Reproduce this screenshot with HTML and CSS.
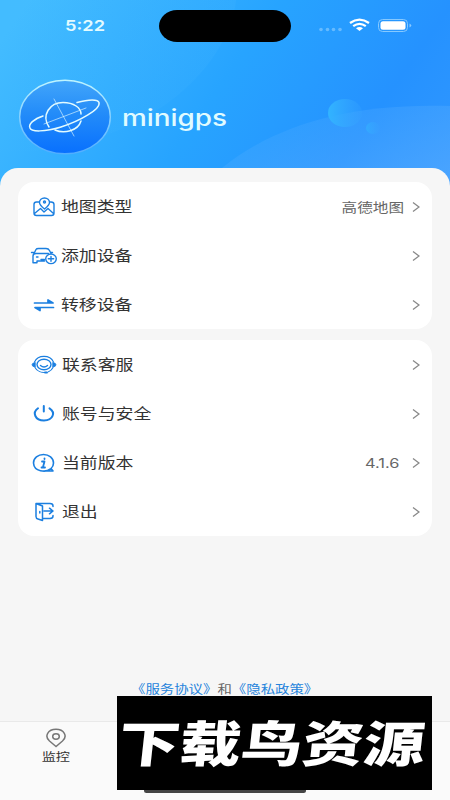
FILE: index.html
```html
<!DOCTYPE html>
<html lang="zh-CN">
<head>
<meta charset="utf-8">
<title>minigps</title>
<link rel="stylesheet" href="styles.css">
</head>
<body>
<main class="screen">
  <header class="hero">
    <svg class="hero-art" viewBox="0 0 450 190" preserveAspectRatio="none">
      <defs>
        <linearGradient id="bubble"><stop stop-color="#32b4ff"/><stop offset="1" stop-color="#38a5ff" stop-opacity=".2"/></linearGradient>
        <linearGradient id="hill" x2="1" y2="1"><stop stop-color="#59b2ff" stop-opacity=".08"/><stop offset="1" stop-color="#68b3ff" stop-opacity=".5"/></linearGradient>
        <linearGradient id="glow" x2="1"><stop stop-color="#6bcbff" stop-opacity="0"/><stop offset="1" stop-color="#6bcbff" stop-opacity=".08"/></linearGradient>
      </defs>
      <path d="M0 0H236C230 60 155 151 0 153Z" fill="url(#glow)"/>
      <path d="M222 168C275 125 350 103 450 106V190H222Z" fill="url(#hill)"/>
      <ellipse cx="345" cy="113" rx="17" ry="14" fill="url(#bubble)"/>
      <ellipse cx="373" cy="128" rx="7" ry="6" fill="url(#bubble)" opacity=".6"/>
    </svg>
    <div class="status">
      <span class="time"><span class="wide">5:22</span></span>
      <span class="island"></span>
      <svg class="signals" viewBox="0 0 94 16">
        <g fill="#7cc5ff" opacity=".75"><circle cx="3" cy="12.500" r="1.800"/><circle cx="9.500" cy="12.500" r="1.800"/><circle cx="15.500" cy="12.500" r="1.800"/><circle cx="22" cy="12.500" r="1.800"/></g>
        <g fill="none" stroke="#fff" stroke-width="2.300"><path d="M32 6Q41.500-.7 51 6M35.200 9.200Q41.500 4.500 47.800 9.200"/></g>
        <path d="M38 11.200Q41.500 8.600 45 11.200L41.500 14Z" fill="#fff"/>
        <rect x="60.500" y="2.500" width="29" height="12" rx="4" fill="none" stroke="#86c9ff"/>
        <rect x="62.500" y="4.300" width="25" height="8.400" rx="2.500" fill="#fff"/>
        <path d="M91.500 6.500Q95 8.500 91.500 10.500Z" fill="#8bcaff"/>
      </svg>
    </div>
    <div class="profile">
      <svg class="avatar" viewBox="0 0 94 76">
        <defs><linearGradient id="ball" x2="0" y2="1"><stop stop-color="#42a5fa"/><stop offset=".45" stop-color="#238cf9"/><stop offset="1" stop-color="#0870fe"/></linearGradient>
        <linearGradient id="rim" x2="0" y2="1"><stop stop-color="#bff5ff"/><stop offset="1" stop-color="#51adff"/></linearGradient></defs>
        <ellipse cx="47" cy="38" rx="45.300" ry="36.800" fill="url(#ball)" stroke="url(#rim)" stroke-width="1.400"/>
        <g fill="none" stroke="#e2fbff" stroke-width="1.500" stroke-linecap="round">
          <path d="M31 48C23 36 32 23.500 45 23.500C56 23.500 63 29 63 35"/>
          <path d="M37 51C46 55 60 52 63 42"/>
          <path d="M59 23.500C71 20 80 20 81 23.500C83 30 62 42 43 48C27 53 13 53 12 49C10 45 16 40 25 37"/>
          <path d="M36 20L56 57M26 45L68 29" stroke-width=".8" opacity=".8"/>
        </g>
      </svg>
      <h1 class="name"><span class="wide">minigps</span></h1>
    </div>
  </header>
  <section class="sheet">
    <div class="card">
      <div class="row">
        <svg class="icon" viewBox="0 0 28 24"><path d="M9 7H6.500Q4 7 4 9.500V18Q4 20.500 6.500 20.500H21.500Q24 20.500 24 18V9.500Q24 7 21 7H20M4.500 18.500L10.500 13.500L14 17L18 13.500L23.500 18.500M14.500 14Q9.500 10 9.500 7.500A5 4.500 0 0 1 19.500 7.500Q19.500 10 14.500 14Z"/><circle cx="14.500" cy="7" r="1"/></svg>
        <span class="label"><span class="wide">地图类型</span></span>
        <span class="value map"><span class="wide">高德地图</span></span>
        <svg class="chevron" viewBox="0 0 8 12"><path d="M1 1.500L7 6L1 10.500"/></svg>
      </div>
      <div class="row">
        <svg class="icon" viewBox="0 0 28 24"><path d="M4 9.500L6 5.500Q6.500 4.500 8.500 4.500H16Q18.500 4.500 19.500 6.500L21 9.500M1.500 8.500H3.500M20.500 8.500H22.500M14.500 17H7V18.800H3V12Q3 9.500 6 9.500H18.500M6.500 13H8M11 15.500H14.500"/><ellipse cx="21" cy="14.800" rx="5.300" ry="4.800"/><path d="M18.300 14.800H23.700M21 12.400V17.200"/></svg>
        <span class="label"><span class="wide">添加设备</span></span>
        <svg class="chevron" viewBox="0 0 8 12"><path d="M1 1.500L7 6L1 10.500"/></svg>
      </div>
      <div class="row">
        <svg class="icon" viewBox="0 0 28 24"><path d="M4.500 10H23L18 7V10M23.500 14.500H5L10 17.500V14.500" fill="#1b7fe0" stroke-width="1.700"/></svg>
        <span class="label"><span class="wide">转移设备</span></span>
        <svg class="chevron" viewBox="0 0 8 12"><path d="M1 1.500L7 6L1 10.500"/></svg>
      </div>
    </div>
    <div class="card">
      <div class="row">
        <svg class="icon" viewBox="0 0 28 24"><path d="M4.500 9C8 1.500 20 1.500 23.500 9M5 14.500C7 18.500 12 19.800 15.500 19.500M23 14.500Q21.500 17.500 18.500 18.800" stroke-width="1.100"/><ellipse cx="14" cy="11.500" rx="7" ry="5.300"/><path d="M10.500 12.500Q14 15.500 17.500 12.500"/><path d="M5 9.500Q2 10 2 11.800T5 14ZM23 9.500Q26 10 26 11.800T23 14Z" fill="#1b7fe0" stroke-width=".8"/><path d="M15 19.600H17" stroke-width="2"/></svg>
        <span class="label"><span class="wide">联系客服</span></span>
        <svg class="chevron" viewBox="0 0 8 12"><path d="M1 1.500L7 6L1 10.500"/></svg>
      </div>
      <div class="row">
        <svg class="icon" viewBox="0 0 28 24"><path d="M8 6.300C2 10.500 5 18.500 14 18.500S26 10.500 19.500 6.300M13.800 4V9.500" stroke-width="2"/></svg>
        <span class="label"><span class="wide">账号与安全</span></span>
        <svg class="chevron" viewBox="0 0 8 12"><path d="M1 1.500L7 6L1 10.500"/></svg>
      </div>
      <div class="row">
        <svg class="icon" viewBox="0 0 28 24"><path d="M20.500 18C16 21.500 4 21 3.500 12C3.500 7 8 3.500 13.500 3.500S23.500 7 23.500 12Q23.500 15.500 21 17.500L23 20H14" stroke-width="1.600"/><path d="M12 10.500H14.500L13 16M11.500 16.500H15M14.500 7.300V8" stroke-width="1.800"/></svg>
        <span class="label"><span class="wide">当前版本</span></span>
        <span class="value version"><span class="wide">4.1.6</span></span>
        <svg class="chevron" viewBox="0 0 8 12"><path d="M1 1.500L7 6L1 10.500"/></svg>
      </div>
      <div class="row">
        <svg class="icon" viewBox="0 0 28 24"><path d="M6 3.500H20Q23 3.500 23 6V6.500M23 15.500V16Q23 18.500 20 18.500H13M6 3.500L12.500 6V20.500L8 19Q6 18.500 6 16.500ZM14 11H22M19.500 8.200L23 11L19.500 13.800M9.800 11.500V13" stroke-width="1.500"/></svg>
        <span class="label"><span class="wide">退出</span></span>
        <svg class="chevron" viewBox="0 0 8 12"><path d="M1 1.500L7 6L1 10.500"/></svg>
      </div>
    </div>
    <p class="legal"><span class="wide"><a>《服务协议》</a>和<a>《隐私政策》</a></span></p>
  </section>
  <nav class="tabs">
    <div class="tab">
      <svg class="pin" viewBox="0 0 22 20"><path d="M11 18.500L4.500 13C-1 8 3 1.300 11 1.300S23 8 17.500 13Z"/><ellipse cx="11" cy="8.500" rx="3.300" ry="2.700"/></svg>
      <span class="wide">监控</span>
    </div>
  </nav>
  <span class="home-bar"></span>
  <div class="banner"><span class="banner-text">下载鸟资源</span></div>
</main>
</body>
</html>
```

FILE: styles.css
```css
* { box-sizing: border-box; }
body { margin: 0; font-family: Inter, "Noto Sans CJK SC", sans-serif; }
.screen { position: relative; width: 450px; height: 800px; overflow: hidden; display: flex; flex-direction: column; background: #f6f6f6; }
.wide { display: inline-block; white-space: nowrap; transform: scaleX(1.2); transform-origin: left center; }
.hero { position: relative; height: 190px; flex: none; background: linear-gradient(125deg, #43bcff 5%, #27a4ff 48%, #2592ff 78%, #3197ff 100%); }
.hero-art { position: absolute; inset: 0; width: 100%; height: 100%; }
.status { position: relative; height: 52px; display: flex; align-items: center; }
.time { width: 94px; margin-left: 65px; color: #e4fbff; font-size: 15.200px; font-weight: 600; line-height: 20px; }
.island { width: 132px; height: 32px; border-radius: 18px / 16px; background: #000; }
.signals { width: 94px; height: 16px; margin-left: 27px; margin-top: -2px; }
.profile { position: relative; display: flex; align-items: center; margin: 27px 0 0 18px; height: 76px; }
.avatar { width: 94px; height: 76px; }
.name { margin: 1px 0 0 10px; font-size: 22.300px; line-height: 28px; font-weight: 450; color: #e0fbff; }
.name .wide { transform: scaleX(1.25); }
.sheet { position: relative; height: 553px; flex: none; margin-top: -22px; padding: 14px 18px 0; border-radius: 18px 18px 0 0; background: #f6f6f6; display: flex; flex-direction: column; gap: 11px; }
.card { background: #fff; border-radius: 16px; }
.row { height: 49px; display: flex; align-items: center; padding: 0 12px; }
.icon { width: 28px; height: 24px; flex: none; fill: none; stroke: #1b7fe0; stroke-width: 1.400; stroke-linecap: round; stroke-linejoin: round; }
.label { flex: 1; margin-left: 3px; font-size: 14.900px; line-height: 22px; color: #333; }
.card + .card .label { margin-left: 4px; }
.chevron { width: 8px; height: 12px; fill: none; stroke: #888; stroke-width: 1.300; }
.value { font-size: 13px; line-height: 20px; color: #666; }
.value .wide { transform-origin: right center; }
.map { margin-right: 8px; }
.version { margin-right: 13px; }
.version .wide { transform: scaleX(1.26); }
.legal { margin: 133px 0 0 113px; font-size: 12px; line-height: 20px; color: #666; }
.legal a { color: #2684dc; }
.tabs { height: 79px; flex: none; border-top: 1px solid #e9e9e9; background: #fafafa; }
.tab { width: 112px; padding-top: 6px; display: flex; flex-direction: column; align-items: center; font-size: 11.800px; line-height: 18px; color: #333; }
.tab .wide { transform-origin: center; }
.pin { width: 22px; height: 20px; fill: none; stroke: #777; stroke-width: 1.500; }
.home-bar { position: absolute; left: 144px; top: 788px; width: 162px; height: 5px; border-radius: 3px; background: #444; }
.banner { position: absolute; left: 117px; top: 696px; width: 315px; height: 94px; background: #000; color: #fff; display: flex; align-items: center; }
.banner-text { font-family: "Noto Sans CJK SC", sans-serif; font-size: 49px; line-height: 70px; font-weight: 900; white-space: nowrap; transform: scaleX(1.25) skewX(-5deg); transform-origin: left center; margin: -5px 0 0 2px; }
```
